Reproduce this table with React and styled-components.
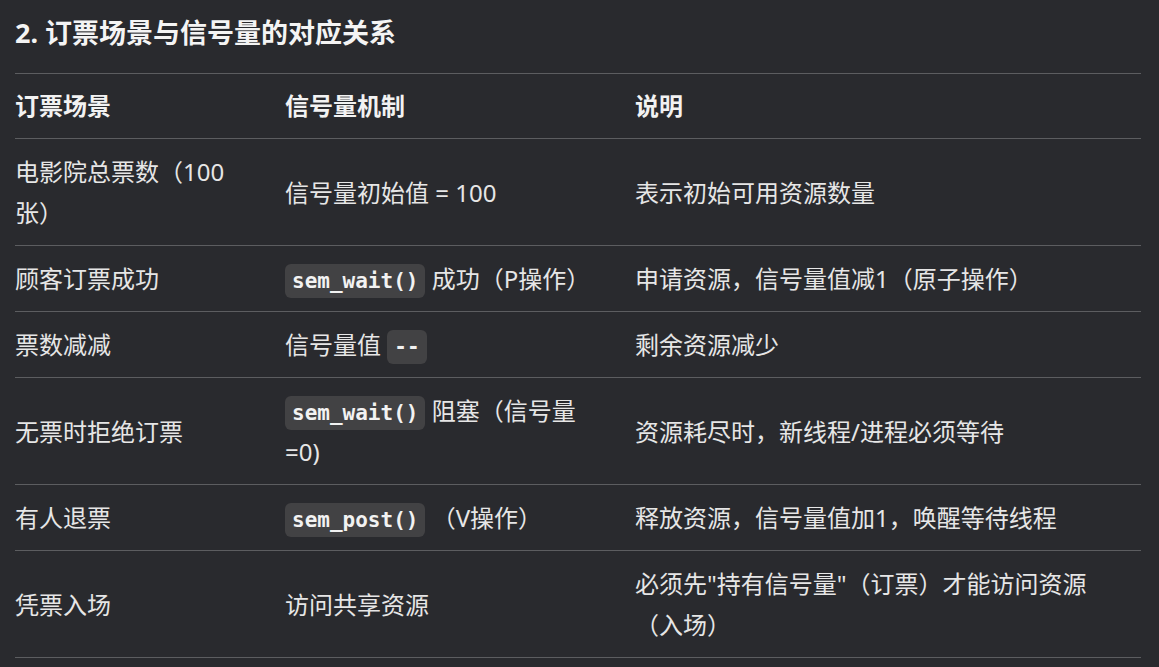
import React from 'react';
import styled, { createGlobalStyle } from 'styled-components';

const GlobalStyle = createGlobalStyle`
    html, body{
        margin: 0;
        padding: 0;
        background-color: #292a2e;
    }
    body{
        font-family: "Noto Sans", "Noto Sans CJK SC", sans-serif;
        color: #e8e8e8;
    }
`;

const rows = [
    { scene: '电影院总票数（100张）', mech: ['信号量初始值 = 100'], note: '表示初始可用资源数量' },
    { scene: '顾客订票成功', mech: [{ code: 'sem_wait()' }, '成功（P操作）'], note: '申请资源，信号量值减1（原子操作）' },
    { scene: '票数减减', mech: ['信号量值 ', { code: '--' }], note: '剩余资源减少' },
    { scene: '无票时拒绝订票', mech: [{ code: 'sem_wait()' }, '阻塞（信号量=0)'], note: '资源耗尽时，新线程/进程必须等待' },
    { scene: '有人退票', mech: [{ code: 'sem_post()' }, '（V操作）'], note: '释放资源，信号量值加1，唤醒等待线程' },
    { scene: '凭票入场', mech: ['访问共享资源'], note: '必须先"持有信号量"（订票）才能访问资源（入场）' },
];

const App = () => {
    return (
        <Page>
            <GlobalStyle />
            <Title>2. 订票场景与信号量的对应关系</Title>
            <Table>
                <colgroup>
                    <col style={{ width: 270 }} />
                    <col style={{ width: 350 }} />
                    <col />
                </colgroup>
                <thead>
                    <tr>
                        <Th>订票场景</Th>
                        <Th>信号量机制</Th>
                        <Th>说明</Th>
                    </tr>
                </thead>
                <tbody>
                    {rows.map((r, i) => (
                        <Row key={i}>
                            <Td>{r.scene}</Td>
                            <Td>
                                {r.mech.map((m, j) =>
                                    typeof m === 'string'
                                        ? <React.Fragment key={j}>{m}</React.Fragment>
                                        : <React.Fragment key={j}><Code>{m.code}</Code>{j < r.mech.length - 1 ? ' ' : ''}</React.Fragment>
                                )}
                            </Td>
                            <Td>{r.note}</Td>
                        </Row>
                    ))}
                </tbody>
            </Table>
        </Page>
    );
};

export default App;

const Page = styled.div`
    width: 1126px;
    margin-left: 15px;
    padding-top: 13px;
`;
const Title = styled.h3`
    margin: 0 0 20px 0;
    font-size: 27px;
    line-height: 40px;
    font-weight: 700;
    color: #f4f4f4;
`;
const Table = styled.table`
    width: 100%;
    table-layout: fixed;
    border-collapse: collapse;
    border-top: 1px solid #5c5d60;
    font-size: 24px;
    line-height: 41px;

    thead tr{
        border-bottom: 1px solid #5c5d60;
    }
    th:first-child, td:first-child{
        padding-right: 40px;
    }
`;
const Th = styled.th`
    text-align: left;
    font-weight: 700;
    color: #f2f2f2;
    padding: 11px 36px 12px 0;
`;
const Row = styled.tr`
    border-bottom: 1px solid #5c5d60;
`;
const Td = styled.td`
    padding: 12px 36px 12px 0;
    vertical-align: middle;
    color: #e6e6e6;
`;
const Code = styled.code`
    font-family: "DejaVu Sans Mono", "Liberation Mono", monospace;
    font-weight: 700;
    font-size: 21px;
    line-height: 1;
    color: #f2f2f2;
    background-color: #424244;
    border-radius: 6px;
    padding: 5px 7px;
`;
